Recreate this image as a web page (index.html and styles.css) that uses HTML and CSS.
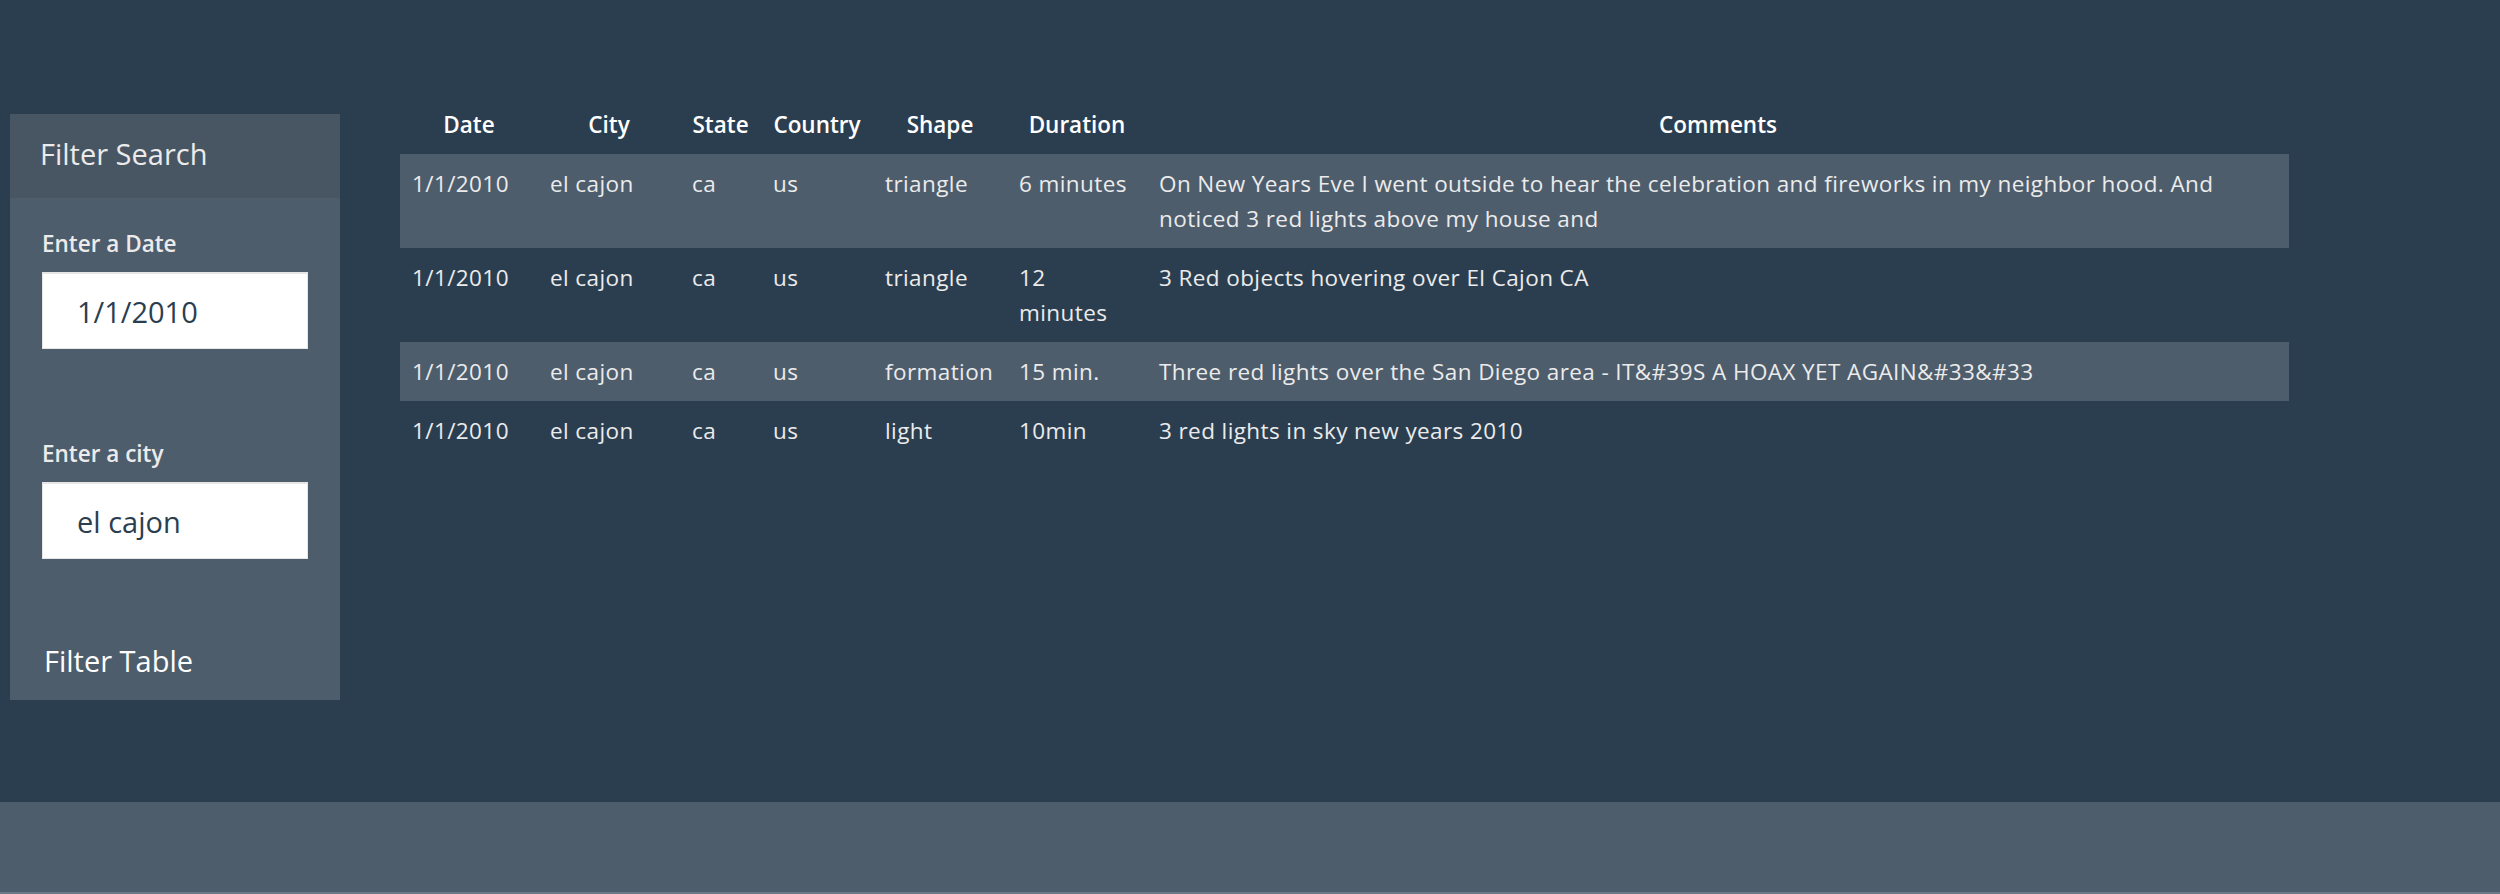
FILE: index.html
```html
<!DOCTYPE html>
<html lang="en">
<head>
<meta charset="utf-8">
<title>UFO Sightings</title>
<link rel="stylesheet" href="styles.css">
</head>
<body>
<div class="page">
  <main class="main">
    <aside class="panel">
      <div class="panel-heading">Filter Search</div>
      <div class="panel-body">
        <label class="field-label" for="datetime">Enter a Date</label>
        <input class="field-input" id="datetime" type="text" value="1/1/2010">
        <label class="field-label field-label-city" for="city">Enter a city</label>
        <input class="field-input" id="city" type="text" value="el cajon">
        <button class="filter-btn" type="button">Filter Table</button>
      </div>
    </aside>
    <section class="table-area">
      <table class="ufo-table">
        <colgroup>
          <col class="col-date">
          <col class="col-city">
          <col class="col-state">
          <col class="col-country">
          <col class="col-shape">
          <col class="col-duration">
          <col class="col-comments">
        </colgroup>
        <thead>
          <tr>
            <th>Date</th>
            <th>City</th>
            <th>State</th>
            <th>Country</th>
            <th>Shape</th>
            <th>Duration</th>
            <th>Comments</th>
          </tr>
        </thead>
        <tbody>
          <tr>
            <td>1/1/2010</td>
            <td>el cajon</td>
            <td>ca</td>
            <td>us</td>
            <td>triangle</td>
            <td>6 minutes</td>
            <td>On New Years Eve I went outside to hear the celebration and fireworks in my neighbor hood. And noticed 3 red lights above my house and</td>
          </tr>
          <tr>
            <td>1/1/2010</td>
            <td>el cajon</td>
            <td>ca</td>
            <td>us</td>
            <td>triangle</td>
            <td>12 minutes</td>
            <td>3 Red objects hovering over El Cajon CA</td>
          </tr>
          <tr>
            <td>1/1/2010</td>
            <td>el cajon</td>
            <td>ca</td>
            <td>us</td>
            <td>formation</td>
            <td>15 min.</td>
            <td>Three red lights over the San Diego area - IT&amp;#39S A HOAX YET AGAIN&amp;#33&amp;#33</td>
          </tr>
          <tr>
            <td>1/1/2010</td>
            <td>el cajon</td>
            <td>ca</td>
            <td>us</td>
            <td>light</td>
            <td>10min</td>
            <td>3 red lights in sky new years 2010</td>
          </tr>
        </tbody>
      </table>
    </section>
  </main>
  <footer class="footer"></footer>
</div>
</body>
</html>
```
FILE: styles.css
```css
* {
  box-sizing: border-box;
}

html, body {
  margin: 0;
  padding: 0;
}

body {
  background: #2b3e50;
  color: #ebebeb;
  font-family: "Open Sans", "Lato", sans-serif;
  font-size: 22.5px;
  line-height: 35px;
}

.page {
  min-height: 894px;
  display: flex;
  flex-direction: column;
}

.main {
  flex: 1;
  display: flex;
  align-items: flex-start;
  padding: 95px 0 0 10px;
}

.panel {
  width: 330px;
  margin-top: 19px;
  background: #4e5d6c;
}

.panel-heading {
  height: 84px;
  display: flex;
  align-items: center;
  padding: 0 30px 4px;
  background: #485563;
  color: #ebebeb;
  font-size: 29px;
  line-height: 1.1;
}

.panel-body {
  display: flex;
  flex-direction: column;
  align-items: flex-start;
  padding: 29px 32px 21px;
}

.field-label {
  font-weight: 600;
  font-size: 22.5px;
  line-height: 34px;
  margin-bottom: 11px;
}

.field-label-city {
  margin-top: 88px;
}

.field-input {
  width: 266px;
  height: 77px;
  padding: 0 34px;
  border: 1px solid #e6e6e6;
  border-top-width: 2px;
  background: #ffffff;
  color: #2b3e50;
  font-family: inherit;
  font-size: 29px;
  outline: none;
}

.filter-btn {
  margin-top: 85px;
  padding: 0 2px;
  border: none;
  background: transparent;
  color: #ffffff;
  font-family: inherit;
  font-size: 29px;
  line-height: 1.2;
}

.table-area {
  margin-left: 60px;
}

.ufo-table {
  width: 1889px;
  table-layout: fixed;
  border-collapse: collapse;
  letter-spacing: 0.4px;
}

.col-date { width: 138px; }
.col-city { width: 142px; }
.col-state { width: 81px; }
.col-country { width: 112px; }
.col-shape { width: 134px; }
.col-duration { width: 140px; }
.col-comments { width: 1142px; }

.ufo-table th {
  padding: 12px;
  text-align: center;
  font-weight: 600;
  color: #ffffff;
  vertical-align: bottom;
  letter-spacing: 0;
}

.ufo-table td {
  padding: 12px;
  vertical-align: top;
  text-align: left;
}

.ufo-table tbody tr:nth-child(odd) {
  background: #4e5d6c;
}

.footer {
  height: 92px;
  background: #4e5d6c;
  border-bottom: 2px solid #6b7886;
}
```
